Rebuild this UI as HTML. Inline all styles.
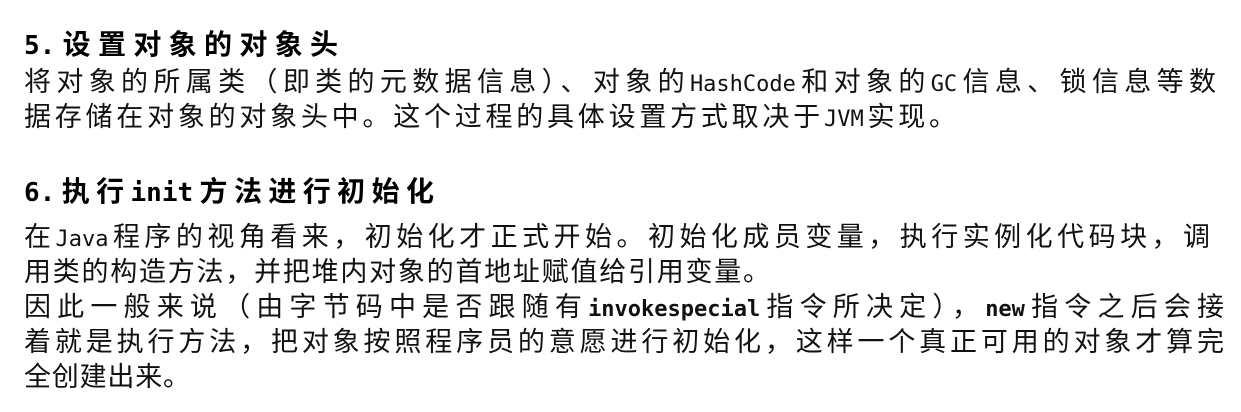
<!DOCTYPE html>
<html><head><meta charset="utf-8"><style>
body{margin:0;background:#fff;width:1241px;height:412px;overflow:hidden;position:relative;font-family:"Liberation Sans","Noto Sans CJK SC",sans-serif;color:#111}
.l{position:absolute;left:24px;white-space:nowrap;font-size:27px;line-height:36px;height:36px;text-align:justify;text-align-last:justify;overflow:visible}
.h{font-weight:bold;font-size:28px;color:#000}
.m{font-family:"DejaVu Sans Mono","Liberation Mono",monospace;font-size:22px}
.h .m{font-size:26px}
b.m{font-weight:bold}
</style></head><body>
<div class="l h" style="top:27px;width:314px"><span class="m">5.</span>设置对象的对象头</div>
<div class="l" style="top:64px;width:1192px">将对象的所属类（即类的元数据信息）、对象的<span class="m">HashCode</span>和对象的<span class="m">GC</span>信息、锁信息等数</div>
<div class="l" style="top:99px;width:932px">据存储在对象的对象头中。这个过程的具体设置方式取决于<span class="m">JVM</span>实现。</div>
<div class="l h" style="top:174px;width:410px"><span class="m">6.</span>执行<b class="m">init</b>方法进行初始化</div>
<div class="l" style="top:219px;width:1186px">在<span class="m">Java</span>程序的视角看来，初始化才正式开始。初始化成员变量，执行实例化代码块，调</div>
<div class="l" style="top:254px;width:746px">用类的构造方法，并把堆内对象的首地址赋值给引用变量。</div>
<div class="l" style="top:289px;width:1200px">因此一般来说（由字节码中是否跟随有<b class="m">invokespecial</b>指令所决定），<b class="m">new</b>指令之后会接</div>
<div class="l" style="top:324px;width:1200px">着就是执行方法，把对象按照程序员的意愿进行初始化，这样一个真正可用的对象才算完</div>
<div class="l" style="top:359px;width:166px">全创建出来。</div>
</body></html>
